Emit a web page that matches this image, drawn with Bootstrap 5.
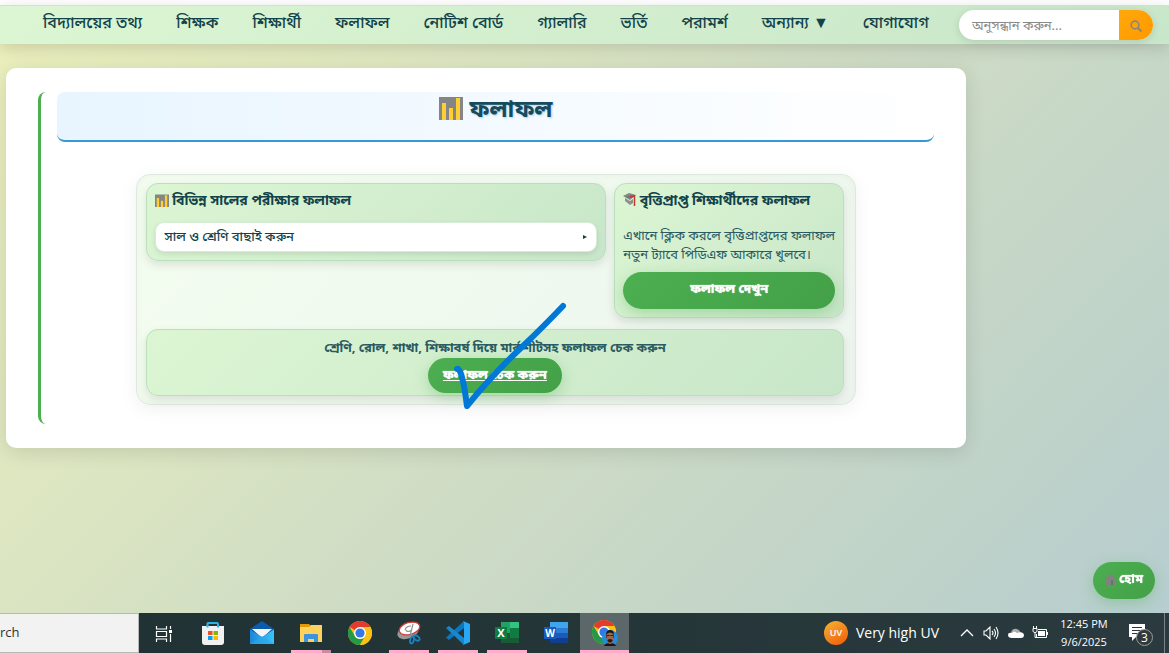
<!DOCTYPE html>
<html lang="bn">
<head>
<meta charset="utf-8">
<meta name="viewport" content="width=device-width, initial-scale=1">
<title>ফলাফল</title>
<link href="https://cdn.jsdelivr.net/npm/bootstrap@5.3.0/dist/css/bootstrap.min.css" rel="stylesheet">
<style>
:root{--ink:#12424a;--leaf:linear-gradient(135deg,#4caf50,#43a047);--mint:linear-gradient(135deg,#dcf6d3,#c8e6c9)}
body{font-family:"Noto Sans","Noto Sans Bengali",sans-serif;color:var(--ink);background:linear-gradient(135deg,#ecf0bc,#dbe5c2 33%,#cfdcc5 52%,#c3d5c8 74%,#bbd0cc 89%,#b6cdd2);background-attachment:fixed;font-size:13px}
.top-strip{height:5px;background:#fff}
.site-nav{border-top:1px solid #d3dfcf;background:linear-gradient(135deg,#dcf6d3,#c8e6c9);box-shadow:0 4px 16px rgba(0,0,0,.15);min-height:39px;padding:4px 16px 0 43px}
.site-nav .nav-link{color:var(--ink);font-size:16px;line-height:24px;font-weight:500;padding:0;white-space:nowrap}
.menu-gap{gap:34px}
.search-pill{width:194px;height:30px;border-radius:15px;overflow:hidden;background:#fff;box-shadow:0 2px 8px rgba(0,0,0,.12)}
.search-pill input{width:0;font-size:13px;line-height:20px;padding:0 13px;border:0;background:transparent}
.search-pill input::placeholder{color:#8a8a8a}
.search-pill button{width:34px;border:0;background:linear-gradient(135deg,#ffa90a,#ff9800)}
.sheet{max-width:960px;margin:24px 6px;padding:24px 32px;border-radius:10px;background:#fff;box-shadow:0 4px 20px rgba(0,0,0,.12)}
.result-section{border-left:3px solid #4caf50;border-radius:8px;padding-left:16px;padding-bottom:19px}
.page-title{height:50px;font-size:24px;line-height:32px;font-weight:700;border-bottom:2px solid #3498db;border-radius:8px;background:linear-gradient(90deg,#e8f5ff,#fff);color:#174a5c;text-shadow:1px 1px 2px rgba(52,152,219,.4)}
.title-gap{gap:7px}
.result-panel{max-width:720px;margin-top:32px;border:1px solid #dfe8df;border-radius:14px;padding:8px 10px 8px 9px;background:linear-gradient(135deg,#f3fdef,#edf5ee);box-shadow:0 4px 18px rgba(0,0,0,.06), inset 0 0 10px rgba(0,0,0,.03);row-gap:11px;column-gap:8px;display:grid;grid-template-columns:2fr 1fr}
.tile{border:1px solid #b9dfbb;border-radius:12px;background:var(--mint);padding:8px;box-shadow:0 4px 10px rgba(0,0,0,.1)}
.tile h2{font-size:14px;line-height:16px;font-weight:700;margin:0}
.tile h2 svg{vertical-align:-2px}
.picker{height:30px;border:1px solid #d6ecd7;border-radius:9px;background:#fff;color:var(--ink);font-size:13px;font-weight:500;box-shadow:0 2px 5px rgba(0,0,0,.1);margin-top:14px;padding:0 9px}
.note{font-size:13px;line-height:19px;color:#2b5b62}
.blurb{margin:18px 0 8px}
.leaf{background:var(--leaf);color:#fff;font-weight:700;font-size:13px;line-height:20px;border:0;border-radius:19px;padding:6px 15px 11px;text-shadow:0 0 1px #fff;box-shadow:0 4px 14px rgba(76,175,80,.35)}
.leaf:hover{color:#fff;background:#388e3c}
.check-tile{grid-column:1/-1;height:67px}
.check-tile .note{line-height:18px;margin-bottom:2px}
.check-tile .leaf{padding-bottom:9px}
.ink-mark{position:absolute;left:315px;top:127px;pointer-events:none}
.home-link{position:fixed;right:14px;bottom:54px;padding-left:12px;padding-right:12px}
.taskbar{height:40px;background:linear-gradient(90deg,#1f3133,#2a3a3e);color:#fff;font-family:"Open Sans","Noto Sans",sans-serif}
.task-search{width:139px;background:#f2f2f2;border:1px solid #b8b8b8;border-left:0;color:#333;font-size:13px}
.app{width:49px;height:40px;border:0;background:none;padding:0}
.app.running{background:linear-gradient(#ffaccd,#ffaccd) center bottom/40px 3px no-repeat}
.app.stacked{background:linear-gradient(90deg,#ffaccd 31px,#c98ba4 31px) center bottom/40px 3px no-repeat}
.app.current{background:linear-gradient(#ffaccd,#ffaccd) center bottom/100% 3px no-repeat #5b6769}
.tray{gap:8px;padding-right:4px}
.tray button{border:0;background:none;padding:0;color:#fff;line-height:1}
.tray .weather{font-size:14px;margin-right:12px}
.clock{width:48px;font-size:11px;line-height:18px;white-space:nowrap;margin:0 12px 0 4px}
.show-desktop{width:1px;background:#7b8587;margin-left:2px}
</style>
<script src="https://cdn.jsdelivr.net/npm/bootstrap@5.3.0/dist/js/bootstrap.bundle.min.js"></script>
</head>
<body class="d-flex flex-column min-vh-100">
<svg width="0" height="0" class="position-absolute" aria-hidden="true">
<defs>
<symbol id="chart" viewBox="0 0 24 24"><path fill="#858585" d="M0 1h24v23H0z"/><path fill="#ffcf33" d="M3 7h4v17H3zM10 12h4v12h-4zM17 2h4v22h-4z"/></symbol>
<symbol id="chrome" viewBox="0 0 24 24"><circle cx="12" cy="12" r="12" fill="#fbc116"/><path fill="#e33b2e" d="M12 12 1.6 6A12 12 0 0 1 22.4 6H12z"/><path fill="#249a48" d="M12 24A12 12 0 0 1 1.6 6l5.2 9A6 6 0 0 0 17.2 15z"/><path fill="#fbc116" d="M12 6h10.4A12 12 0 0 1 12 24l5.200-9z"/><circle cx="12" cy="12" r="6" fill="#fff"/><circle cx="12" cy="12" r="4.6" fill="#3478e5"/></symbol>
<linearGradient id="sun" x1="0" y1="0" x2=".6" y2="1"><stop stop-color="#f3b632"/><stop offset="1" stop-color="#f26510"/></linearGradient>
<linearGradient id="letter" x1="0" x2="1"><stop stop-color="#1b86d8"/><stop offset="1" stop-color="#38c6f8"/></linearGradient>
</defs></svg>
<div class="top-strip"></div>
<nav class="site-nav d-flex align-items-start justify-content-between" aria-label="প্রধান মেনু">
<ul class="nav flex-nowrap menu-gap">
<li><a class="nav-link" href="#">বিদ্যালয়ের তথ্য</a></li>
<li><a class="nav-link" href="#">শিক্ষক</a></li>
<li><a class="nav-link" href="#">শিক্ষার্থী</a></li>
<li><a class="nav-link" href="#">ফলাফল</a></li>
<li><a class="nav-link" href="#">নোটিশ বোর্ড</a></li>
<li><a class="nav-link" href="#">গ্যালারি</a></li>
<li><a class="nav-link" href="#">ভর্তি</a></li>
<li><a class="nav-link" href="#">পরামর্শ</a></li>
<li><a class="nav-link" href="#">অন্যান্য ▼</a></li>
<li><a class="nav-link" href="#">যোগাযোগ</a></li>
</ul>
<form class="search-pill d-flex flex-shrink-0" role="search">
<input class="flex-grow-1" type="search" aria-label="অনুসন্ধান" placeholder="অনুসন্ধান করুন...">
<button class="flex-shrink-0" type="button" aria-label="অনুসন্ধান"><svg width="12" height="12" viewBox="0 0 12 12" fill="none" stroke="#8b8878" stroke-width="1.6"><circle cx="5" cy="5" r="3.9"/><path stroke-width="2.2" d="m7.700 7.700 3.800 3.800"/></svg></button>
</form>
</nav>
<main class="sheet flex-shrink-0">
<section class="result-section">
<h1 class="page-title d-flex justify-content-center mb-0"><span class="d-flex title-gap"><svg class="mt-1" width="24" height="24" aria-hidden="true"><use href="#chart"/></svg>ফলাফল</span></h1>
<div class="result-panel position-relative mx-auto">
<div class="tile align-self-start">
<h2><svg width="14" height="13" viewBox="0 0 24 23" preserveAspectRatio="none" aria-hidden="true"><use href="#chart" width="24" height="24"/></svg> বিভিন্ন সালের পরীক্ষার ফলাফল</h2>
<button class="picker d-flex w-100 align-items-center justify-content-between" type="button" aria-expanded="false">সাল ও শ্রেণি বাছাই করুন<svg width="4" height="4" aria-hidden="true"><path fill="#12424a" d="M0 0 4 2 0 4z"/></svg></button>
</div>
<div class="tile">
<h2><svg width="13" height="14" viewBox="0 0 13 14" aria-hidden="true"><path fill="#858585" d="M0 3 6 0l7 2-6 5z"/><path fill="#8f8f8f" d="m2 5 5 3 3-2v4l-3 2-5-4z"/><path fill="#777" d="M3 3.500 9 2l1 1.500-4 2z"/><path fill="none" stroke="#c0392b" stroke-width="1.5" d="m7 4 4.500-1v10"/></svg> বৃত্তিপ্রাপ্ত শিক্ষার্থীদের ফলাফল</h2>
<p class="note blurb">এখানে ক্লিক করলে বৃত্তিপ্রাপ্তদের ফলাফল নতুন ট্যাবে পিডিএফ আকারে খুলবে।</p>
<button class="btn leaf w-100" type="button">ফলাফল দেখুন</button>
</div>
<div class="tile check-tile d-flex flex-column align-items-center">
<p class="note fw-bold">শ্রেণি, রোল, শাখা, শিক্ষাবর্ষ দিয়ে মার্কশীটসহ ফলাফল চেক করুন</p>
<a class="btn leaf text-decoration-underline" href="#">ফলাফল চেক করুন</a>
</div>
<svg class="ink-mark" width="118" height="112" aria-hidden="true"><path fill="none" stroke="#0078d7" stroke-width="6" stroke-linecap="round" stroke-linejoin="round" d="M5 67q5-2 10 37Q40 73 72 43 90 26 111 4"/></svg>
</div>
</section>
</main>
<a class="btn leaf home-link" href="#"><svg width="11" height="11" viewBox="0 0 11 11" aria-hidden="true"><path fill="#7f827f" d="M5.500 0 11 5h-1v6H1V5H0z"/><path fill="#5e7a5e" d="M6 6h2v5H6z"/></svg> হোম</a>
<footer class="taskbar d-flex mt-auto flex-shrink-0" lang="en">
<div class="task-search d-flex align-items-center flex-shrink-0">rch</div>
<div class="d-flex flex-shrink-0">
<button class="app" type="button" aria-label="Task view"><svg width="18" height="18" fill="none" stroke="#fff" stroke-width="1.2"><path d="M1.500 1v3h10V1M1.500 17v-3h10v3M1.500 6.500h10v5h-10zM15.500 1v3m0 5v8"/><path fill="#fff" stroke="none" d="M14 5h3v3h-3z"/></svg></button>
<button class="app" type="button" aria-label="Store"><svg width="24" height="24"><path fill="none" stroke="#27b5e8" stroke-width="2" d="M6.500 8V2.500Q6.500 2 7 2h9q1 0 1 1v5"/><path fill="#f1f1f1" d="M1 5h22v16q0 3-3 3H4q-3 0-3-3z"/><path fill="none" stroke="#27b5e8" stroke-width="2" d="M6.500 4v2.500m10.500-2.500v2.500"/><path fill="#f25022" d="M7 10h4.500v4H7z"/><path fill="#7fba00" d="M12.500 10H17v4h-4.500z"/><path fill="#00a4ef" d="M7 15h4.500v4H7z"/><path fill="#ffb900" d="M12.500 15H17v4h-4.500z"/></svg></button>
<button class="app" type="button" aria-label="Mail"><svg width="24" height="24"><path fill="#0b5cad" d="M0 8 12 0l12 8v8H0z"/><path fill="#f4f4f7" d="M2 8h20L12 17z"/><path fill="url(#letter)" d="M0 8.500 12 16l12-7.500V23H0z"/><path fill="#2aa9ec" d="M0 23 12 15l12 8z" opacity=".6"/></svg></button>
<button class="app running stacked" type="button" aria-label="File Explorer"><svg width="22" height="20"><path fill="#e29b04" d="M0 1h9l2 2h10v5H0z"/><path fill="#ffd25e" d="M0 4h9l2-2h11v17H0z"/><path fill="#3d94dc" d="M4 19v-7q0-1 1-1h12q1 0 1 1v7h-4v-3H8v3z"/></svg></button>
<button class="app" type="button" aria-label="Chrome"><svg width="24" height="24"><use href="#chrome"/></svg></button>
<button class="app running" type="button" aria-label="Snipping Tool"><svg width="24" height="24"><ellipse cx="11" cy="11" rx="11" ry="6.500" fill="#999" transform="rotate(-20 11 11)"/><ellipse cx="12.500" cy="7.500" rx="10.500" ry="6" fill="#fff" stroke="#d43a35" stroke-width="1.3" transform="rotate(-16 12.500 7.500)"/><path fill="none" stroke="#8c8c8c" stroke-width="1.1" d="m16 3-3 12M8 9q1-4 6-4M9 9q1 3 6 0m-2 3 3 4"/><g fill="none" stroke="#1a81c4" stroke-width="1.8"><ellipse cx="15" cy="19" rx="1.800" ry="3.500" transform="rotate(15 15 19)"/><ellipse cx="19.500" cy="17" rx="3.500" ry="2" transform="rotate(35 19.500 17)"/></g></svg></button>
<button class="app running" type="button" aria-label="Visual Studio Code"><svg width="24" height="24"><path fill="#0b77bf" d="M18 0v7L3 19l-3-2.500z"/><path fill="#1588d1" d="m0 7 3-2 15 12v7z"/><path fill="#2aa7f2" d="m17 0 7 3v18l-7 3 1-1.500v-21z"/></svg></button>
<button class="app running" type="button" aria-label="Excel"><svg width="24" height="24"><path fill="#21a366" d="M6 1h9v11H6z"/><path fill="#33c481" d="M15 1h9v6h-9z"/><path fill="#107c41" d="M15 7h9v5h-9z"/><path fill="#185c37" d="M6 12h18v10H6z"/><path fill="#107c41" d="M15 12h9v5h-9zM0 6h12v12H0z"/><text x="6" y="16" fill="#fff" font-size="11" font-weight="700" text-anchor="middle">X</text></svg></button>
<button class="app" type="button" aria-label="Word"><svg width="24" height="24"><path fill="#41a5ee" d="M6 1h18v6H6z"/><path fill="#2b7cd3" d="M6 7h18v5H6z"/><path fill="#185abd" d="M6 12h18v5H6z"/><path fill="#103f91" d="M6 17h18v5H6z"/><path fill="#185abd" d="M0 6h12v12H0z"/><text x="6" y="16" fill="#fff" font-size="10" font-weight="700" text-anchor="middle">W</text></svg></button>
<button class="app current" type="button" aria-label="Chrome profile"><svg width="26" height="26"><use href="#chrome" width="24" height="24"/><circle cx="18" cy="18" r="8" fill="#258be0"/><path fill="#171717" d="M14 15q0-5 4-5t4 5v3h-8zM12 26q1-3 6-3t6 3z"/><path fill="#9d6548" d="M14.500 14q3.500-3 7 0v5q-1 5-3.500 5t-3.500-5z"/><path fill="#2b1b17" d="M15.500 20q2.500-2 5 0v1q-2.500 3-5 0zM15 15h2.500v1H15zm3.500 0H21v1h-2.500z"/></svg></button>
</div>
<div class="tray d-flex align-items-center ms-auto">
<button class="weather d-flex align-items-center gap-2" type="button"><svg width="24" height="24" aria-hidden="true"><circle cx="12" cy="12" r="12" fill="url(#sun)"/><text x="12" y="15" fill="#fff" font-size="9" font-weight="600" text-anchor="middle">UV</text></svg>Very high UV</button>
<button type="button" aria-label="Hidden icons"><svg width="16" height="16" fill="none" stroke="#fff" stroke-width="1.3"><path d="m2 11 6-6 6 6"/></svg></button>
<button type="button" aria-label="Volume"><svg width="17" height="16" fill="none" stroke="#fff" stroke-width="1.1"><path d="M1 6h2l4-4v12l-4-4H1zM9 6q2 2 0 4m2-6q3 4 0 8m2-10q4 6 0 12"/></svg></button>
<button type="button" aria-label="OneDrive"><svg width="16" height="16"><path fill="#aaa" d="M3 8q1-5 6-4 3 1 4 5l-9 3z"/><path fill="#fff" d="M4 13q-4 0-4-3t4-2q2-3 5 0 6-2 7 2 0 3-3 3z"/></svg></button>
<button type="button" aria-label="Battery"><svg width="16" height="16" fill="none" stroke="#fff"><path d="M6 4.500h8.500v8h-10V9M15.500 7v3M1 3.500h4v3Q3 9 1 6.500zM1.500 1v2m3-2v2M3 8v4.500h2"/><path fill="#fff" stroke="none" d="M6 6h7v5H6z"/></svg></button>
<div class="clock text-center">12:45 PM<br>9/6/2025</div>
<button type="button" aria-label="3 notifications"><svg width="26" height="26"><path fill="#fff" d="M1 4h16v13H8l-4 4v-4H1z"/><path stroke="#293a3d" d="M4 7.500h10M4 10.500h10M4 13.500h6"/><circle cx="16.500" cy="17.500" r="8" fill="#303a3c" stroke="#989e9f"/><text x="16.500" y="22" fill="#fff" font-size="12" text-anchor="middle">3</text></svg></button>
<span class="show-desktop align-self-stretch"></span>
</div>
</footer>
</body>
</html>
